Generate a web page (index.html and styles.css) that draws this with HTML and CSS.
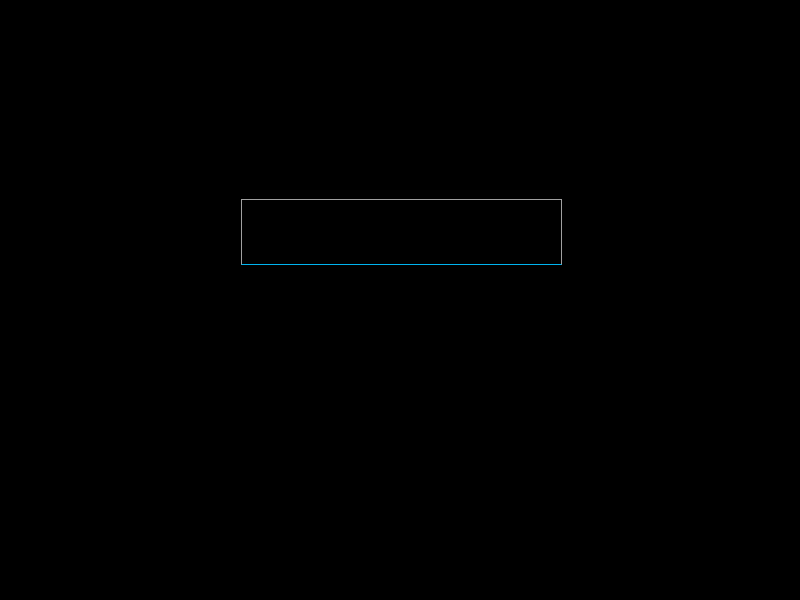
FILE: index.html
```html
<!DOCTYPE html>
<html lang="en">
<head>
<meta charset="utf-8">
<title>Input</title>
<link rel="stylesheet" href="styles.css">
</head>
<body>
<main class="page">
  <div class="field" aria-label="Text input"></div>
</main>
</body>
</html>
```

FILE: styles.css
```css
html, body {
  margin: 0;
  padding: 0;
  background: #000000;
  height: 100%;
}
.page {
  box-sizing: border-box;
  height: 100%;
  padding: 199px 0 0 241px;
  font-family: "Liberation Sans", Arial, sans-serif;
}
.field {
  box-sizing: border-box;
  width: 321px;
  height: 66px;
  background: #000000;
  border: 1px solid #a0a0a0;
  border-bottom: 1px solid #00b4f0;
}
```
